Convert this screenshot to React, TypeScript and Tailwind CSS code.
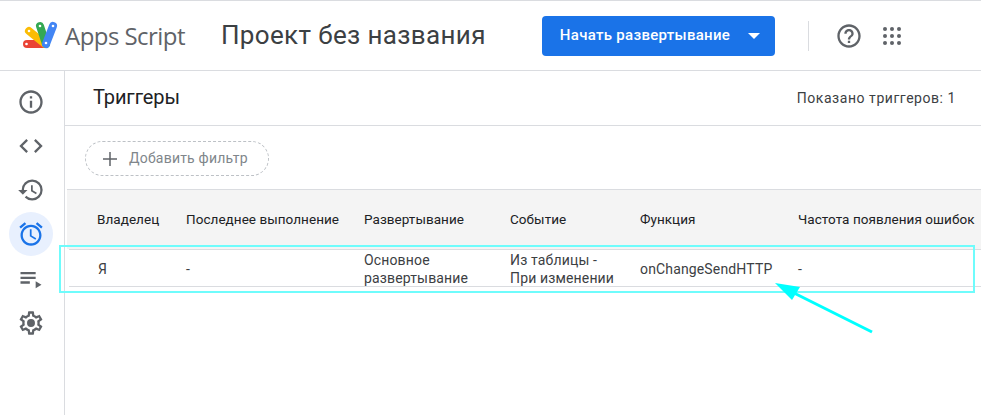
import React from "react";

const cols = ["w-[89px]", "w-[178px]", "w-[146px]", "w-[130px]", "w-[158px]", "flex-1"];

function Logo() {
  return (
    <svg width="38" height="34" viewBox="0 0 38 34" className="shrink-0">
      <path d="M5 25 L22 25" stroke="#ea4335" strokeWidth="8" strokeLinecap="round" />
      <path d="M7 12 L23 25" stroke="#fbbc04" strokeWidth="8" strokeLinecap="round" />
      <path d="M18 7 L24 25" stroke="#34a853" strokeWidth="8" strokeLinecap="round" />
      <path d="M31 7 L24 25" stroke="#4285f4" strokeWidth="8" strokeLinecap="round" />
      <circle cx="4.5" cy="25" r="1.3" fill="#fff" />
      <circle cx="7" cy="12" r="1.3" fill="#fff" />
      <circle cx="18" cy="7" r="1.3" fill="#fff" />
      <circle cx="31" cy="7" r="1.3" fill="#fff" />
      <circle cx="24" cy="24" r="1.3" fill="#fff" />
    </svg>
  );
}

function Icon({ d, color = "#5f6368", size = 28 }: { d: string; color?: string; size?: number }) {
  return (
    <svg width={size} height={size} viewBox="0 0 24 24" fill={color} fillRule="evenodd">
      <path d={d} />
    </svg>
  );
}

const ICONS = {
  info: "M11 7h2v2h-2zm0 4h2v6h-2zm1-9C6.48 2 2 6.48 2 12s4.48 10 10 10 10-4.48 10-10S17.52 2 12 2zm0 18c-4.41 0-8-3.59-8-8s3.59-8 8-8 8 3.59 8 8-3.59 8-8 8z",
  code: "M9.4 16.6 4.8 12l4.6-4.6L8 6l-6 6 6 6 1.4-1.4zm5.2 0 4.6-4.6-4.6-4.6L16 6l6 6-6 6-1.4-1.4z",
  history: "M13 3a9 9 0 0 0-9 9H1l3.89 3.89.07.14L9 12H6c0-3.87 3.13-7 7-7s7 3.13 7 7-3.13 7-7 7c-1.93 0-3.68-.79-4.94-2.06l-1.42 1.42A8.954 8.954 0 0 0 13 21a9 9 0 0 0 0-18zm-1 5v5l4.28 2.54.72-1.21-3.5-2.08V8H12z",
  alarm: "M22 5.72l-4.6-3.86-1.29 1.53 4.6 3.86L22 5.72zM7.88 3.39 6.6 1.86 2 5.71l1.29 1.53 4.59-3.85zM12.5 8H11v6l4.75 2.85.75-1.23-4-2.37V8zM12 4c-4.97 0-9 4.03-9 9s4.03 9 9 9 9-4.03 9-9-4.03-9-9-9zm0 16c-3.87 0-7-3.13-7-7s3.13-7 7-7 7 3.13 7 7-3.13 7-7 7z",
  queue: "M3 6h13v2H3zm0 4h13v2H3zm0 4h8v2H3zm13 0v6l5-3z",
  gear: "M19.43 12.98c.04-.32.07-.64.07-.98s-.03-.66-.07-.98l2.11-1.65c.19-.15.24-.42.12-.64l-2-3.46c-.12-.22-.39-.3-.61-.22l-2.49 1c-.52-.4-1.08-.73-1.69-.98l-.38-2.65A.488.488 0 0 0 14 2h-4c-.25 0-.46.18-.49.42l-.38 2.65c-.61.25-1.17.59-1.69.98l-2.49-1c-.23-.09-.49 0-.61.22l-2 3.46c-.13.22-.07.49.12.64l2.11 1.65c-.04.32-.07.65-.07.98s.03.66.07.98l-2.11 1.65c-.19.15-.24.42-.12.64l2 3.46c.12.22.39.3.61.22l2.49-1c.52.4 1.08.73 1.69.98l.38 2.65c.03.24.24.42.49.42h4c.25 0 .46-.18.49-.42l.38-2.65c.61-.25 1.17-.59 1.69-.98l2.49 1c.23.09.49 0 .61-.22l2-3.46c.12-.22.07-.49-.12-.64l-2.11-1.65zM17.45 11.27c.04.31.05.52.05.73 0 .21-.02.43-.05.73l-.14 1.13.89.7 1.08.84-.7 1.21-1.27-.51-1.04-.42-.9.68c-.43.32-.84.56-1.25.73l-1.06.43-.16 1.13-.2 1.35h-1.4l-.19-1.35-.16-1.13-1.06-.43c-.43-.18-.83-.41-1.23-.71l-.91-.7-1.06.43-1.27.51-.7-1.21 1.08-.84.89-.7-.14-1.13c-.03-.31-.05-.54-.05-.74s.02-.43.05-.73l.14-1.13-.89-.7-1.08-.84.7-1.21 1.27.51 1.04.42.9-.68c.43-.32.84-.56 1.25-.73l1.06-.43.16-1.13.2-1.35h1.39l.19 1.35.16 1.13 1.06.43c.43.18.83.41 1.23.71l.91.7 1.06-.43 1.27-.51.7 1.21-1.07.85-.89.7.14 1.13zM12 8.6a3.4 3.4 0 1 0 0 6.8 3.4 3.4 0 0 0 0-6.8z",
  help: "M11 18h2v-2h-2v2zm1-16C6.48 2 2 6.48 2 12s4.48 10 10 10 10-4.48 10-10S17.52 2 12 2zm0 18c-4.41 0-8-3.59-8-8s3.59-8 8-8 8 3.59 8 8-3.59 8-8 8zm0-14c-2.21 0-4 1.79-4 4h2c0-1.1.9-2 2-2s2 .9 2 2c0 2-3 1.75-3 5h2c0-2.25 3-2.5 3-5 0-2.21-1.79-4-4-4z",
};

function Apps() {
  const dots = [];
  for (let y = 0; y < 3; y++) for (let x = 0; x < 3; x++) dots.push(<circle key={`${x}${y}`} cx={2 + x * 7} cy={2 + y * 7} r="2" fill="#5f6368" />);
  return <svg width="18" height="18" viewBox="0 0 18 18">{dots}</svg>;
}

export default function App() {
  return (
    <div className="relative w-[981px] h-[415px] overflow-hidden bg-white font-['Roboto',sans-serif] text-[#202124]">
      <header className="h-[71px] flex items-center border-b border-t border-[#dadce0] pl-[22px]">
        <Logo />
        <span className="ml-[5px] text-[24px] tracking-[-0.55px] text-[#5f6368] font-['Open_Sans',sans-serif]">Apps Script</span>
        <span className="ml-[36px] text-[26px] tracking-[0.35px] text-[#3c4043]">Проект без названия</span>
        <button className="ml-[56px] h-[40px] w-[233px] rounded bg-[#1a73e8] text-white text-[15px] font-medium tracking-[0.3px] flex items-center pl-[18px]">
          Начать развертывание
          <span className="ml-[18px] w-0 h-0 border-x-[6px] border-x-transparent border-t-[6px] border-t-white" />
        </button>
        <div className="ml-[33px] w-px h-[30px] bg-[#dadce0]" />
        <div className="ml-[26px] flex"><Icon d={ICONS.help} /></div>
        <div className="ml-[20px] flex"><Apps /></div>
      </header>
      <div className="flex h-[344px]">
        <nav className="w-[65px] shrink-0 border-r border-[#dadce0] flex flex-col items-center pt-[9px] pr-[2px]">
          <div className="h-[44px] flex items-center"><Icon d={ICONS.info} /></div>
          <div className="h-[44px] flex items-center"><Icon d={ICONS.code} /></div>
          <div className="h-[44px] flex items-center"><Icon d={ICONS.history} /></div>
          <div className="h-[44px] w-[44px] rounded-full bg-[#e8f0fe] flex items-center justify-center"><Icon d={ICONS.alarm} color="#1a73e8" /></div>
          <div className="h-[45px] flex items-center pt-[1px]"><Icon d={ICONS.queue} /></div>
          <div className="h-[44px] flex items-center"><Icon d={ICONS.gear} /></div>
        </nav>
        <main className="flex-1 min-w-0">
          <div className="h-[55px] flex items-center justify-between border-b border-[#dadce0] pl-[28px] pr-[25px]">
            <span className="text-[20px] tracking-[-0.1px] mt-[-2px]">Триггеры</span>
            <span className="text-[14px] tracking-[0.55px] text-[#3c4043]">Показано триггеров: 1</span>
          </div>
          <div className="h-[63px] flex items-center pl-[20px]">
            <div className="h-[35px] w-[184px] rounded-full border border-dashed border-[#bdc1c6] flex items-center pl-[15px] mt-[2px]">
              <svg width="18" height="18" viewBox="0 0 18 18"><path d="M9 2v14M2 9h14" stroke="#5f6368" strokeWidth="1.5" /></svg>
              <span className="ml-[10px] text-[14px] tracking-[0.2px] text-[#80868b]">Добавить фильтр</span>
            </div>
          </div>
          <div className="ml-[2px]">
            <div className="h-[60px] bg-[#f4f4f4] border-t border-[#dadce0] flex items-center pl-[30px] text-[13.5px] tracking-[0.05px] text-[#202124]">
              {["Владелец", "Последнее выполнение", "Развертывание", "Событие", "Функция", "Частота появления ошибок"].map((t, i) => (
                <div key={t} className={`${cols[i]} whitespace-nowrap`}>{t}</div>
              ))}
            </div>
            <div className="h-[38px] ml-[2px] border-y border-[#dadce0] flex items-center pt-[2px] pl-[28px] text-[14px] leading-[18px] tracking-[0.15px] text-[#3c4043]">
              <div className={cols[0]}><span className="ml-[1px]">Я</span></div>
              <div className={cols[1]}>-</div>
              <div className={cols[2]}>Основное<br />развертывание</div>
              <div className={cols[3]}>Из таблицы -<br />При изменении</div>
              <div className={cols[4]}>onChangeSendHTTP</div>
              <div className={cols[5]}>-</div>
            </div>
          </div>
        </main>
      </div>
      <div className="absolute left-[59px] top-[245px] w-[916px] h-[48px] border-2 border-[#6ffcfc]" />
      <svg className="absolute left-[770px] top-[275px]" width="110" height="65" viewBox="0 0 110 65">
        <path d="M102 57 L22 17" stroke="#00ffff" strokeWidth="3" />
        <path d="M5 8 L30 12 L22 25 Z" fill="#00ffff" />
      </svg>
    </div>
  );
}
